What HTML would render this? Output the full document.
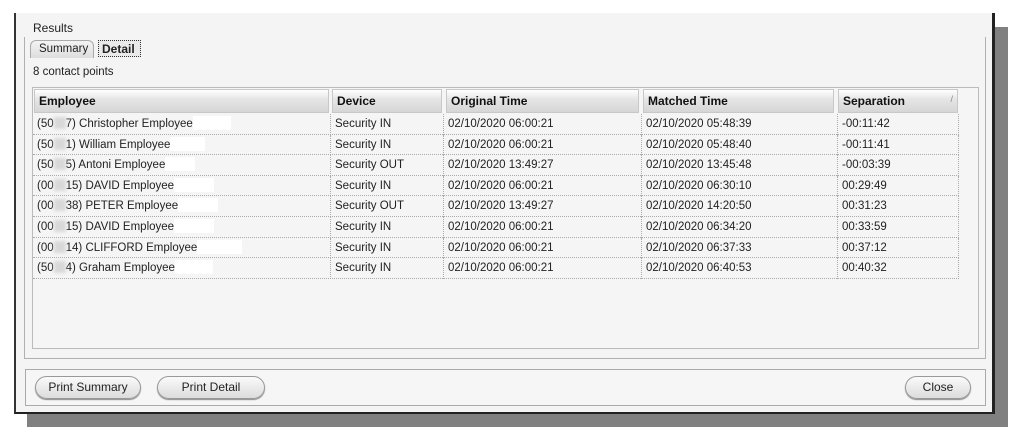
<!DOCTYPE html>
<html><head><style>
*{margin:0;padding:0;box-sizing:border-box}
body{width:1024px;height:445px;background:#fff;position:relative;overflow:hidden;font-family:"Liberation Sans",sans-serif;font-size:11.5px;color:#222}
.a{position:absolute}
.shadow{left:27px;top:27px;width:981px;height:400px;background:#808080}
.win{left:14px;top:13px;width:981px;height:401px;background:#f4f4f4;border-left:2px solid #333;border-right:3px solid #222;border-bottom:2px solid #222;border-top:0}
.grp{left:24px;top:37px;width:962px;height:322px;border:1px solid #b0b0b0;border-top:none}
.tbl{left:32px;top:87px;width:947px;height:262px;border:1px solid #bbb;background:#f5f5f5}
.hd{top:89px;height:24px;background:linear-gradient(#fff,#e6e6e6 40%,#d6d6d6);border:1px solid #c8c8c8;font-weight:bold;padding:4px 4px;font-size:12px;color:#111}
.row{position:absolute;left:33px;width:926px;height:20.6px;border-bottom:1px dotted #aaa}
.c{position:absolute;top:0;height:20.6px;border-right:1px dotted #aaa;padding:0 4px;line-height:20px;white-space:nowrap;overflow:hidden}
.btnbar{left:25px;top:369px;width:961px;height:37px;border:1px solid #aaa;background:#f6f6f6}
.btn{top:376px;height:23px;border:1px solid #999;border-radius:12px;background:linear-gradient(#fafafa,#dcdcdc);text-align:center;line-height:21px;font-size:12px;box-shadow:0 1px 1px #888}
.blur{display:inline-block;width:12px;height:12px;background:#d8d8d8;vertical-align:-2px;filter:blur(1.5px)}
.w{display:inline-block;height:14px;background:#fff;vertical-align:-3px}
</style></head><body>
<div class="a shadow"></div>
<div class="a win"></div>
<div class="a" style="left:33px;top:21px;font-size:12px">Results</div>
<div class="a grp"></div>
<div class="a" style="left:30px;top:40px;width:64px;height:18px;border:1px solid #aaa;border-bottom:none;border-radius:6px 6px 0 0;background:linear-gradient(#f4f4f4,#ddd);font-size:11.5px;padding:2px 8px">Summary</div>
<div class="a" style="left:98px;top:40px;width:43px;height:17px;border:1px dotted #333;font-weight:bold;padding:1px 3px;font-size:12px;background:#eaeaea">Detail</div>
<div class="a" style="left:33px;top:66px;font-size:11.5px">8 contact points</div>
<div class="a tbl"></div>
<div class="a hd" style="left:34px;width:295px">Employee</div>
<div class="a hd" style="left:332px;width:110px">Device</div>
<div class="a hd" style="left:446px;width:193px">Original Time</div>
<div class="a hd" style="left:643px;width:191px">Matched Time</div>
<div class="a hd" style="left:838px;width:120px">Separation<span style="float:right;font-weight:normal;color:#888;font-size:9px">/</span></div>

<div class="row" style="top:114px"><div class="c" style="left:0;width:298px">(50<span class="blur"></span>7) Christopher Employee<span class="w" style="width:38px"></span></div><div class="c" style="left:298px;width:113px">Security IN</div><div class="c" style="left:411px;width:198px">02/10/2020 06:00:21</div><div class="c" style="left:609px;width:196px">02/10/2020 05:48:39</div><div class="c" style="left:805px;width:121px">-00:11:42</div></div>
<div class="row" style="top:134.6px"><div class="c" style="left:0;width:298px">(50<span class="blur"></span>1) William Employee<span class="w" style="width:35px"></span></div><div class="c" style="left:298px;width:113px">Security IN</div><div class="c" style="left:411px;width:198px">02/10/2020 06:00:21</div><div class="c" style="left:609px;width:196px">02/10/2020 05:48:40</div><div class="c" style="left:805px;width:121px">-00:11:41</div></div>
<div class="row" style="top:155.2px"><div class="c" style="left:0;width:298px">(50<span class="blur"></span>5) Antoni Employee<span class="w" style="width:30px"></span></div><div class="c" style="left:298px;width:113px">Security OUT</div><div class="c" style="left:411px;width:198px">02/10/2020 13:49:27</div><div class="c" style="left:609px;width:196px">02/10/2020 13:45:48</div><div class="c" style="left:805px;width:121px">-00:03:39</div></div>
<div class="row" style="top:175.8px"><div class="c" style="left:0;width:298px">(00<span class="blur"></span>15) DAVID Employee<span class="w" style="width:40px"></span></div><div class="c" style="left:298px;width:113px">Security IN</div><div class="c" style="left:411px;width:198px">02/10/2020 06:00:21</div><div class="c" style="left:609px;width:196px">02/10/2020 06:30:10</div><div class="c" style="left:805px;width:121px">00:29:49</div></div>
<div class="row" style="top:196.4px"><div class="c" style="left:0;width:298px">(00<span class="blur"></span>38) PETER Employee<span class="w" style="width:40px"></span></div><div class="c" style="left:298px;width:113px">Security OUT</div><div class="c" style="left:411px;width:198px">02/10/2020 13:49:27</div><div class="c" style="left:609px;width:196px">02/10/2020 14:20:50</div><div class="c" style="left:805px;width:121px">00:31:23</div></div>
<div class="row" style="top:217px"><div class="c" style="left:0;width:298px">(00<span class="blur"></span>15) DAVID Employee<span class="w" style="width:40px"></span></div><div class="c" style="left:298px;width:113px">Security IN</div><div class="c" style="left:411px;width:198px">02/10/2020 06:00:21</div><div class="c" style="left:609px;width:196px">02/10/2020 06:34:20</div><div class="c" style="left:805px;width:121px">00:33:59</div></div>
<div class="row" style="top:237.6px"><div class="c" style="left:0;width:298px">(00<span class="blur"></span>14) CLIFFORD Employee<span class="w" style="width:45px"></span></div><div class="c" style="left:298px;width:113px">Security IN</div><div class="c" style="left:411px;width:198px">02/10/2020 06:00:21</div><div class="c" style="left:609px;width:196px">02/10/2020 06:37:33</div><div class="c" style="left:805px;width:121px">00:37:12</div></div>
<div class="row" style="top:258.2px"><div class="c" style="left:0;width:298px">(50<span class="blur"></span>4) Graham Employee<span class="w" style="width:38px"></span></div><div class="c" style="left:298px;width:113px">Security IN</div><div class="c" style="left:411px;width:198px">02/10/2020 06:00:21</div><div class="c" style="left:609px;width:196px">02/10/2020 06:40:53</div><div class="c" style="left:805px;width:121px">00:40:32</div></div>

<div class="a btnbar"></div>
<div class="a btn" style="left:35px;width:106px">Print Summary</div>
<div class="a btn" style="left:157px;width:108px">Print Detail</div>
<div class="a btn" style="left:905px;width:66px">Close</div>
</body></html>
